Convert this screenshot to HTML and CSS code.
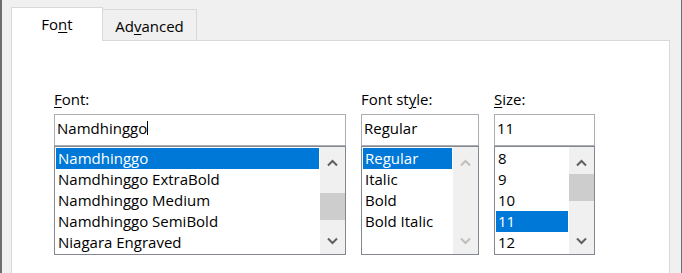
FILE: index.html
```html
<!DOCTYPE html>
<html lang="en">
<head>
    <meta charset="UTF-8">
    <title>Font</title>
    <link rel="stylesheet" href="styles.css">
</head>
<body>
    <div class="dialog">
        <div class="tabs">
            <div class="tab active">Fo<u>n</u>t</div>
            <div class="tab">Ad<u>v</u>anced</div>
        </div>
        <div class="panel">
            <div class="fields">

                <div class="field field-font">
                    <label><u>F</u>ont:</label>
                    <div class="textbox">Namdhinggo<span class="caret"></span></div>
                    <div class="listbox">
                        <ul class="items">
                            <li class="selected">Namdhinggo</li>
                            <li>Namdhinggo ExtraBold</li>
                            <li>Namdhinggo Medium</li>
                            <li>Namdhinggo SemiBold</li>
                            <li>Niagara Engraved</li>
                        </ul>
                        <div class="scrollbar">
                            <div class="arrow up"><svg width="11" height="8" viewBox="0 0 11 8"><polyline points="1,6.5 5.5,2 10,6.5"/></svg></div>
                            <div class="track"><div class="thumb" style="margin-top: 19px"></div></div>
                            <div class="arrow down"><svg width="11" height="8" viewBox="0 0 11 8"><polyline points="1,1.5 5.5,6 10,1.5"/></svg></div>
                        </div>
                    </div>
                </div>

                <div class="field field-style">
                    <label>Font st<u>y</u>le:</label>
                    <div class="textbox">Regular</div>
                    <div class="listbox">
                        <ul class="items">
                            <li class="selected">Regular</li>
                            <li>Italic</li>
                            <li>Bold</li>
                            <li>Bold Italic</li>
                        </ul>
                        <div class="scrollbar disabled">
                            <div class="arrow up"><svg width="11" height="8" viewBox="0 0 11 8"><polyline points="1,6.5 5.5,2 10,6.5"/></svg></div>
                            <div class="track"></div>
                            <div class="arrow down"><svg width="11" height="8" viewBox="0 0 11 8"><polyline points="1,1.5 5.5,6 10,1.5"/></svg></div>
                        </div>
                    </div>
                </div>

                <div class="field field-size">
                    <label><u>S</u>ize:</label>
                    <div class="textbox">11</div>
                    <div class="listbox">
                        <ul class="items">
                            <li>8</li>
                            <li>9</li>
                            <li>10</li>
                            <li class="selected">11</li>
                            <li>12</li>
                        </ul>
                        <div class="scrollbar">
                            <div class="arrow up"><svg width="11" height="8" viewBox="0 0 11 8"><polyline points="1,6.5 5.5,2 10,6.5"/></svg></div>
                            <div class="track"><div class="thumb" style="margin-top: 0px"></div></div>
                            <div class="arrow down"><svg width="11" height="8" viewBox="0 0 11 8"><polyline points="1,1.5 5.5,6 10,1.5"/></svg></div>
                        </div>
                    </div>
                </div>

            </div>
        </div>
    </div>
</body>
</html>
```

FILE: styles.css
```css
body {
    margin: 0;
    padding: 0;
    font-family: "Open Sans", "Noto Sans", sans-serif;
    font-size: 15px;
    color: #000;
    background: #f0f0f0;
    overflow: hidden;
}
.dialog {
    width: 682px;
    height: 273px;
    box-sizing: border-box;
    border-left: 2px solid #6e6e6e;
    border-right: 1px solid #6e6e6e;
    padding: 7px 11px 0 9px;
    overflow: hidden;
}
.tabs {
    display: flex;
    align-items: flex-end;
    height: 33px;
}
.tab {
    box-sizing: border-box;
    height: 31px;
    width: 94px;
    padding-top: 6px;
    line-height: 20px;
    text-align: center;
    border-top: 1px solid #d9d9d9;
    border-right: 1px solid #d9d9d9;
    background: #f0f0f0;
}
.tab.active {
    position: relative;
    z-index: 1;
    width: 92px;
    height: 34px;
    margin-bottom: -1px;
    padding-top: 6px;
    border-left: 1px solid #d9d9d9;
    background: #fff;
}
.tab u, label u {
    text-decoration-thickness: 1px;
    text-underline-offset: 2px;
}
.panel {
    height: 260px;
    box-sizing: border-box;
    background: #fff;
    border: 1px solid #d9d9d9;
    padding: 48px 0 0 42px;
}
.fields {
    display: flex;
    gap: 15px;
}
.field {
    display: flex;
    flex-direction: column;
}
.field-font {
    width: 292px;
}
.field-style {
    width: 118px;
}
.field-size {
    width: 101px;
}
label {
    line-height: 20px;
    margin-bottom: 5px;
}
.textbox {
    box-sizing: border-box;
    height: 32px;
    border: 1px solid #abadb3;
    padding: 0 0 3px 2px;
    line-height: 27px;
    white-space: nowrap;
}
.caret {
    display: inline-block;
    width: 1px;
    height: 14px;
    background: #000;
    vertical-align: -1px;
}
.listbox {
    box-sizing: border-box;
    height: 109px;
    border: 1px solid #828790;
    display: flex;
}
.items {
    flex: 1;
    list-style: none;
    margin: 0;
    padding: 1px;
}
.items li {
    height: 21px;
    line-height: 21px;
    padding-left: 2px;
    white-space: nowrap;
}
.items li.selected {
    background: #0078d7;
    color: #fff;
}
.scrollbar {
    width: 25px;
    background: #f0f0f0;
    display: flex;
    flex-direction: column;
}
.arrow {
    height: 27px;
    display: flex;
    justify-content: center;
    align-items: center;
}
.arrow.up svg {
    margin-top: 4px;
}
.arrow svg polyline {
    fill: none;
    stroke: #606060;
    stroke-width: 2;
}
.scrollbar.disabled .arrow svg polyline {
    stroke: #bfbfbf;
}
.track {
    flex: 1;
}
.thumb {
    height: 27px;
    background: #cdcdcd;
}
```
